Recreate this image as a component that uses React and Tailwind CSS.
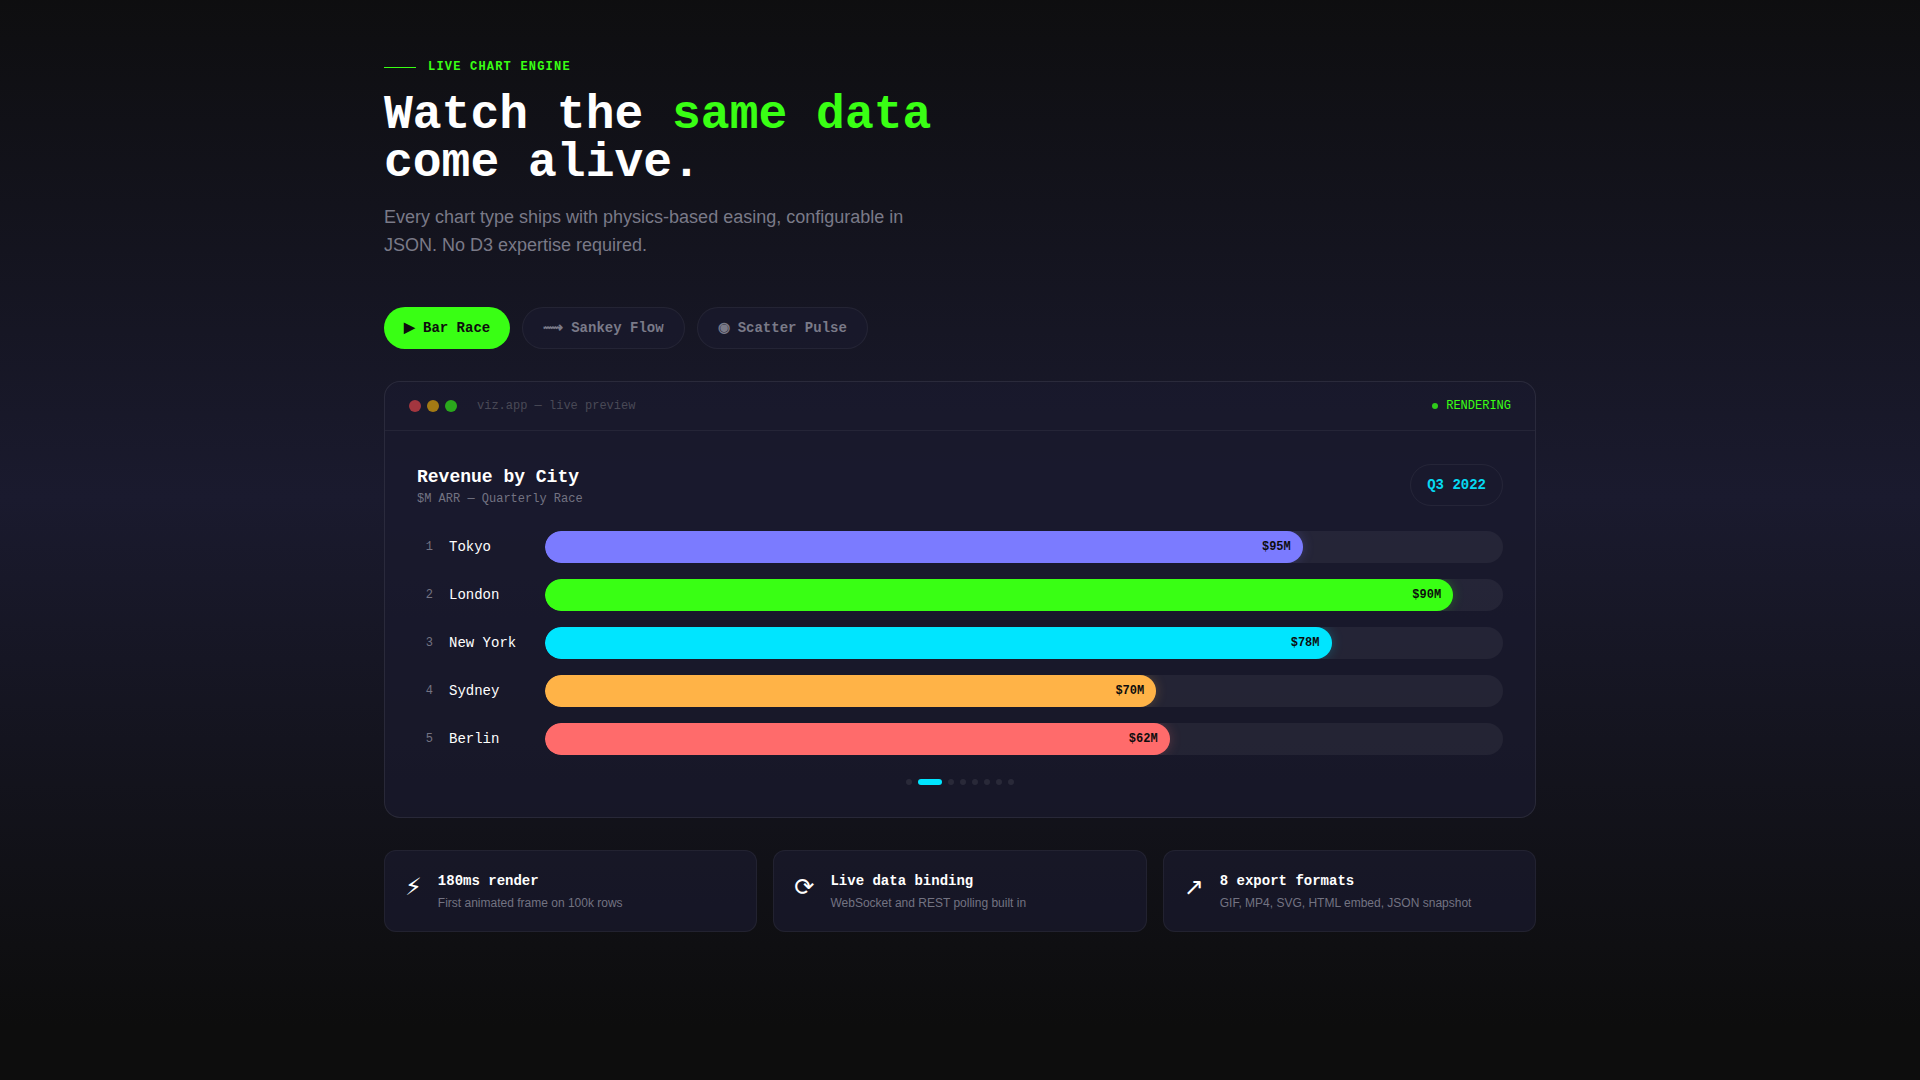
import { useState } from 'react';

const tabs = [
  { id: 'bar', icon: '▶', label: 'Bar Race', iconFont: "font-['Liberation_Mono',sans-serif]" },
  { id: 'sankey', icon: '⟿', label: 'Sankey Flow', iconFont: "font-['Liberation_Mono',monospace]" },
  { id: 'scatter', icon: '◉', label: 'Scatter Pulse', iconFont: "font-['Liberation_Mono',sans-serif]" },
];

const cities = [
  { name: 'Tokyo', value: 95, width: 79.1, color: 'bg-[#7b7bff]', glow: 'shadow-[0_0_12px_#7b7bff40]' },
  { name: 'London', value: 90, width: 94.8, color: 'bg-[#39ff14]', glow: 'shadow-[0_0_12px_#39ff1440]' },
  { name: 'New York', value: 78, width: 82.1, color: 'bg-[#00e5ff]', glow: 'shadow-[0_0_12px_#00e5ff40]' },
  { name: 'Sydney', value: 70, width: 63.8, color: 'bg-[#ffb347]', glow: 'shadow-[0_0_12px_#ffb34740]' },
  { name: 'Berlin', value: 62, width: 65.2, color: 'bg-[#ff6b6b]', glow: 'shadow-[0_0_12px_#ff6b6b40]' },
];

const quarters = ['Q2 2022', 'Q3 2022', 'Q4 2022', 'Q1 2023', 'Q2 2023', 'Q3 2023', 'Q4 2023', 'Q1 2024'];

const features = [
  { icon: '⚡', title: '180ms render', text: 'First animated frame on 100k rows' },
  { icon: '⟳', title: 'Live data binding', text: 'WebSocket and REST polling built in' },
  { icon: '↗', title: '8 export formats', text: 'GIF, MP4, SVG, HTML embed, JSON snapshot' },
];

const BarRow = ({ rank, city }) => (
  <li className="flex items-center gap-4">
    <span className="w-4 text-right text-xs text-[#737382]">{rank}</span>
    <span className="w-20 text-sm text-white">{city.name}</span>
    <div className="h-8 flex-1 overflow-hidden rounded-full bg-white/5">
      <div
        className={`flex h-full items-center justify-end rounded-full pr-3 ${city.color} ${city.glow}`}
        style={{ width: `${city.width}%` }}
      >
        <span className="text-xs font-bold text-[#0d0d0d]">${city.value}M</span>
      </div>
    </div>
  </li>
);

const App = () => {
  const [activeTab, setActiveTab] = useState('bar');
  const [quarter, setQuarter] = useState(1);

  return (
    <main className="min-h-screen bg-linear-[to_bottom,#0d0d0d_-4%,#1a1a2e_46%,#0d0d0d_95%] px-6 pt-[59px] pb-24 font-['Liberation_Mono',sans-serif]">
      <div className="mx-auto max-w-6xl">
        {/* Heading */}
        <header>
          <div className="mb-4 flex items-center gap-3">
            <span className="h-px w-8 bg-[#39ff14]" />
            <span className="text-xs font-bold tracking-widest text-[#39ff14] uppercase">Live Chart Engine</span>
          </div>
          <h1 className="text-5xl font-bold text-white">
            Watch the <span className="text-[#39ff14]">same data</span>
            <br />
            come alive.
          </h1>
          <p className="mt-4 max-w-xl font-['Liberation_Sans',sans-serif] text-lg leading-7 text-[#7a7a88]">
            Every chart type ships with physics-based easing, configurable in JSON. No D3 expertise required.
          </p>
        </header>

        {/* Chart types */}
        <div className="mt-12 flex flex-wrap gap-3">
          {tabs.map((tab) => (
            <button
              key={tab.id}
              type="button"
              onClick={() => setActiveTab(tab.id)}
              className={`flex items-center gap-2 rounded-full px-5 py-2.5 text-sm font-bold ${
                activeTab === tab.id
                  ? 'bg-[#39ff14] text-[#0d0d0d]'
                  : 'border border-white/5 bg-[#1a1a2e]/60 text-[#7a7a88]'
              }`}
            >
              <span className={tab.iconFont}>{tab.icon}</span>
              {tab.label}
            </button>
          ))}
        </div>

        {/* Preview window */}
        <section className="mt-8 rounded-2xl border border-white/8 bg-[#1a1a2e]/70">
          <div className="flex items-center justify-between border-b border-white/5 px-6 py-4">
            <div className="flex items-center gap-5">
              <div className="flex gap-1.5">
                <span className="size-3 rounded-full bg-[#a3363f]" />
                <span className="size-3 rounded-full bg-[#a37a14]" />
                <span className="size-3 rounded-full bg-[#2aa81c]" />
              </div>
              <span className="text-xs text-[#494956]">viz.app — live preview</span>
            </div>
            <div className="flex items-center gap-2">
              <span className="size-1.5 rounded-full bg-[#2fcb1a]" />
              <span className="text-xs text-[#39ff14]">RENDERING</span>
            </div>
          </div>

          <div className="p-8">
            <div className="mb-6 flex items-center justify-between">
              <div>
                <h2 className="text-lg font-bold text-white">Revenue by City</h2>
                <p className="text-xs text-[#737382]">$M ARR — Quarterly Race</p>
              </div>
              <span className="rounded-full border border-white/5 px-4 py-2.5 text-sm font-bold text-[#06d9f2]">
                {quarters[quarter]}
              </span>
            </div>

            <ol className="space-y-4">
              {cities.map((city, index) => (
                <BarRow key={city.name} rank={index + 1} city={city} />
              ))}
            </ol>

            <div className="mt-6 flex justify-center gap-1.5">
              {quarters.map((label, index) => (
                <button
                  key={label}
                  type="button"
                  aria-label={label}
                  onClick={() => setQuarter(index)}
                  className={`h-1.5 rounded-full ${index === quarter ? 'w-6 bg-[#00e5ff]' : 'w-1.5 bg-white/8'}`}
                />
              ))}
            </div>
          </div>
        </section>

        {/* Features */}
        <div className="mt-8 grid grid-cols-1 gap-4 md:grid-cols-3">
          {features.map((feature) => (
            <div
              key={feature.title}
              className="flex items-start gap-4 rounded-xl border border-white/5 bg-[#1a1a2e]/70 p-5"
            >
              <span className="font-['DejaVu_Sans',sans-serif] text-2xl text-white">{feature.icon}</span>
              <div>
                <h3 className="text-sm font-bold text-white">{feature.title}</h3>
                <p className="mt-1 font-['Liberation_Sans',sans-serif] text-xs text-[#737382]">{feature.text}</p>
              </div>
            </div>
          ))}
        </div>
      </div>
    </main>
  );
};

export default App;
